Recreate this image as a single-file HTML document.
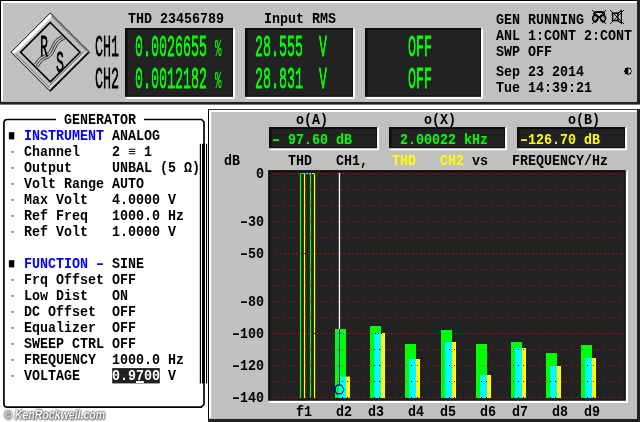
<!DOCTYPE html>
<html lang="en"><head><meta charset="utf-8"><title>R&amp;S UPL THD display</title>
<style>
html,body{margin:0;padding:0;background:#fff}
body{width:640px;height:422px;position:relative;overflow:hidden}
#bg{position:absolute;left:0;top:0;display:block}
span{position:absolute;white-space:pre;display:block;will-change:transform}
.m{font:bold 13.333px/16px "Liberation Mono","DejaVu Sans Mono",monospace;height:16px;transform:scaleY(1.035);transform-origin:0 11.55px;color:#000}
.b{font:29.6px/40px "Liberation Mono","DejaVu Sans Mono",monospace;height:40px;transform:scale(0.4505,1);transform-origin:0 27.9px;-webkit-text-stroke-width:0.8px}
.m i{font-style:normal;display:inline-block;transform:scaleX(1.55)}
.b i{font-style:normal;font-size:0.82em;-webkit-text-stroke-width:0.3px}
.wm{font:italic bold 13.7px/14px "Liberation Sans",Arial,sans-serif;color:#fff;text-shadow:0 0 1.5px #444,0 0 2px #555,0 0 2.5px #777,1px 1px 2px #777;transform:scaleX(0.772);transform-origin:0 0}
</style></head>
<body>
<svg id="bg" width="640" height="422" viewBox="0 0 640 422">
<rect x="0.00" y="0.00" width="640.00" height="422.00" fill="#ffffff" />
<rect x="0.00" y="0.00" width="640.00" height="104.60" fill="#202020" />
<rect x="0.00" y="0.00" width="637.00" height="101.70" fill="#000" />
<rect x="1.00" y="1.00" width="636.00" height="100.70" fill="#fff" />
<rect x="3.00" y="3.00" width="634.00" height="98.70" fill="#c0c0c0" />
<path d="M235 28 L235 99 L125 99 L127.0 96.8 L233.0 96.8 L233.0 30.2 Z" fill="#fff"/>
<rect x="125.00" y="28.00" width="108.00" height="68.80" fill="#0e0e0e" />
<rect x="127.40" y="30.00" width="104.60" height="65.50" fill="#222222" />
<path d="M355 28 L355 99 L245 99 L247.0 96.8 L353.0 96.8 L353.0 30.2 Z" fill="#fff"/>
<rect x="245.00" y="28.00" width="108.00" height="68.80" fill="#0e0e0e" />
<rect x="247.40" y="30.00" width="104.60" height="65.50" fill="#222222" />
<path d="M483 28 L483 99 L365 99 L367.0 96.8 L481.0 96.8 L481.0 30.2 Z" fill="#fff"/>
<rect x="365.00" y="28.00" width="116.00" height="68.80" fill="#0e0e0e" />
<rect x="367.40" y="30.00" width="112.60" height="65.50" fill="#222222" />
<path d="M50.3 12.9 L89.6 52.2 L50.3 91.5 L11.0 52.2 Z" fill="#c0c0c0" stroke="#000" stroke-width="0.9"/>
<path d="M11.8 52.2 L50.3 13.7 L51.5 16.2 L50.3 18.6 L16.7 52.2 L14.3 53.4 Z" fill="#fff"/>
<path d="M85.1 52.2 L50.3 87.0" stroke="#fff" stroke-width="0.9" fill="none"/>
<path d="M83.3 52.2 L50.3 85.2 M86.7 51.2 L51.3 15.8" stroke="#444" stroke-width="0.8" fill="none"/>
<path d="M15.3 53.2 L49.3 87.2" stroke="#555" stroke-width="0.7" fill="none"/>
<path d="M89.6 52.2 L50.3 91.5 L50.3 89.6 L87.7 52.2 Z" fill="#000"/>
<path d="M50.3 22.5 L80.0 52.2 L50.3 81.9 L20.6 52.2 Z" fill="none" stroke="#000" stroke-width="1.6"/>
<path d="M34.4 64.4 C36.9 60.4 39.4 56.9 42.9 55.7 C46.4 54.4 48.9 52.4 50.9 48.4 C52.9 43.9 54.4 40.4 56.9 38.7 C58.4 37.6 59.9 36.9 61.8 35.6" fill="none" stroke="#111" stroke-width="0.85"/>
<path d="M36.0 66.0 C38.5 62.0 41.0 58.5 44.5 57.3 C48.0 56.0 50.5 54.0 52.5 50.0 C54.5 45.5 56.0 42.0 58.5 40.3 C60.0 39.2 61.5 38.5 63.4 37.2" fill="none" stroke="#111" stroke-width="0.85"/>
<path d="M37.6 67.6 C40.1 63.6 42.6 60.1 46.1 58.9 C49.6 57.6 52.1 55.6 54.1 51.6 C56.1 47.1 57.6 43.6 60.1 41.9 C61.6 40.8 63.1 40.1 65.0 38.8" fill="none" stroke="#111" stroke-width="0.85"/>
<g stroke="#000" fill="none"><path d="M594.3 16.5 L594.3 13.6 Q594.3 12 596.6 12 L601.7 12 Q604 12 604 13.6 L604 16.5" stroke-width="2.1"/><path d="M595.2 15.2 Q598 15.4 598 18.4 Q597.6 21.2 595.4 22.2 Q592.6 20.6 592.7 18 Q593 15.4 595.2 15.2 Z" stroke-width="1.5" fill="#aaa"/><path d="M603.1 15.2 Q600.3 15.4 600.3 18.4 Q600.7 21.2 602.9 22.2 Q605.7 20.6 605.6 18 Q605.3 15.4 603.1 15.2 Z" stroke-width="1.5" fill="#aaa"/><path d="M592 10 L606 24 M606 10 L592 24" stroke-width="0.9"/></g>
<g stroke="#000" fill="none"><rect x="612.6" y="13.2" width="5.2" height="7.4" stroke-width="1.5"/><path d="M617.8 13.2 L621.4 10.6 L621.4 23.2 L617.8 20.6" stroke-width="1.2"/><path d="M610 10 L624 24 M624 10 L610 24" stroke-width="0.9"/></g>
<circle cx="628" cy="71.1" r="3.9" fill="#000"/>
<path d="M628.4 68 L631.6 71.1 L628.4 74.2 Z" fill="#ddd"/>
<circle cx="631.70" cy="72.63" r="0.7" fill="#c0c0c0"/>
<circle cx="629.53" cy="74.80" r="0.7" fill="#c0c0c0"/>
<circle cx="626.47" cy="74.80" r="0.7" fill="#c0c0c0"/>
<circle cx="624.30" cy="72.63" r="0.7" fill="#c0c0c0"/>
<circle cx="624.30" cy="69.57" r="0.7" fill="#c0c0c0"/>
<circle cx="626.47" cy="67.40" r="0.7" fill="#c0c0c0"/>
<circle cx="629.53" cy="67.40" r="0.7" fill="#c0c0c0"/>
<circle cx="631.70" cy="69.57" r="0.7" fill="#c0c0c0"/>
<rect x="208.00" y="109.00" width="432.00" height="313.00" fill="#202020" />
<rect x="208.00" y="109.00" width="429.00" height="309.70" fill="#000" />
<rect x="209.00" y="109.80" width="428.00" height="308.90" fill="#fff" />
<rect x="211.20" y="112.00" width="425.80" height="306.70" fill="#c0c0c0" />
<path d="M379 127 L379 150.2 L269 150.2 L271.0 148.2 L377.0 148.2 L377.0 129.0 Z" fill="#fff"/>
<rect x="269.00" y="127.00" width="108.00" height="21.20" fill="#0e0e0e" />
<rect x="271.40" y="129.00" width="104.60" height="18.00" fill="#222222" />
<path d="M507 127 L507 150.2 L389 150.2 L391.0 148.2 L505.0 148.2 L505.0 129.0 Z" fill="#fff"/>
<rect x="389.00" y="127.00" width="116.00" height="21.20" fill="#0e0e0e" />
<rect x="391.40" y="129.00" width="112.60" height="18.00" fill="#222222" />
<path d="M627 127 L627 150.2 L517 150.2 L519.0 148.2 L625.0 148.2 L625.0 129.0 Z" fill="#fff"/>
<rect x="517.00" y="127.00" width="108.00" height="21.20" fill="#0e0e0e" />
<rect x="519.40" y="129.00" width="104.60" height="18.00" fill="#222222" />
<path d="M628 170.1 L628 403 L268.1 403 L270.3 400.7 L625.8 400.7 L625.8 172.4 Z" fill="#fff"/>
<rect x="268.10" y="170.10" width="357.70" height="230.60" fill="#0e0e0e" />
<rect x="270.50" y="172.10" width="354.10" height="227.60" fill="#222222" />
<rect x="335.00" y="329.00" width="11.00" height="69.00" fill="#00ff00" />
<rect x="346.00" y="376.60" width="4.00" height="21.40" fill="#ffff00" />
<rect x="339.00" y="376.60" width="7.00" height="21.40" fill="#00ffff" />
<rect x="370.00" y="326.00" width="11.00" height="72.00" fill="#00ff00" />
<rect x="381.00" y="333.00" width="4.00" height="65.00" fill="#ffff00" />
<rect x="374.00" y="333.00" width="7.00" height="65.00" fill="#00ffff" />
<rect x="405.00" y="344.00" width="11.00" height="54.00" fill="#00ff00" />
<rect x="416.00" y="359.00" width="4.00" height="39.00" fill="#ffff00" />
<rect x="409.00" y="359.00" width="7.00" height="39.00" fill="#00ffff" />
<rect x="441.00" y="330.00" width="11.00" height="68.00" fill="#00ff00" />
<rect x="452.00" y="342.00" width="4.00" height="56.00" fill="#ffff00" />
<rect x="445.00" y="342.00" width="7.00" height="56.00" fill="#00ffff" />
<rect x="476.00" y="344.00" width="11.00" height="54.00" fill="#00ff00" />
<rect x="487.00" y="375.00" width="4.00" height="23.00" fill="#ffff00" />
<rect x="480.00" y="375.00" width="7.00" height="23.00" fill="#00ffff" />
<rect x="511.00" y="342.00" width="11.00" height="56.00" fill="#00ff00" />
<rect x="522.00" y="348.00" width="4.00" height="50.00" fill="#ffff00" />
<rect x="515.00" y="348.00" width="7.00" height="50.00" fill="#00ffff" />
<rect x="546.00" y="353.00" width="11.00" height="45.00" fill="#00ff00" />
<rect x="557.00" y="366.00" width="4.00" height="32.00" fill="#ffff00" />
<rect x="550.00" y="366.00" width="7.00" height="32.00" fill="#00ffff" />
<rect x="581.00" y="345.00" width="11.00" height="53.00" fill="#00ff00" />
<rect x="592.00" y="358.00" width="4.00" height="40.00" fill="#ffff00" />
<rect x="585.00" y="358.00" width="7.00" height="40.00" fill="#00ffff" />
<defs><pattern id="g3" patternUnits="userSpaceOnUse" x="273" y="173" width="16" height="16"><rect x="0" y="0" width="1" height="1" fill="#f00808"/><rect x="5" y="0" width="1" height="1" fill="#f00808"/><rect x="10" y="0" width="1" height="1" fill="#f00808"/></pattern><pattern id="g5" patternUnits="userSpaceOnUse" x="273" y="173" width="16" height="16"><rect x="0" y="0" width="1" height="1" fill="#f00808"/><rect x="3" y="0" width="1" height="1" fill="#f00808"/><rect x="6" y="0" width="1" height="1" fill="#f00808"/><rect x="9" y="0" width="1" height="1" fill="#f00808"/><rect x="12" y="0" width="1" height="1" fill="#f00808"/></pattern><pattern id="g4" patternUnits="userSpaceOnUse" x="273" y="173" width="16" height="16"><rect x="3" y="0" width="1" height="1" fill="#f00808"/><rect x="7" y="0" width="1" height="1" fill="#f00808"/><rect x="11" y="0" width="1" height="1" fill="#f00808"/><rect x="15" y="0" width="1" height="1" fill="#f00808"/></pattern></defs>
<rect x="273" y="173" width="349" height="1" fill="url(#g5)"/>
<rect x="273" y="189" width="349" height="1" fill="url(#g3)"/>
<rect x="273" y="205" width="349" height="1" fill="url(#g3)"/>
<rect x="273" y="221" width="349" height="1" fill="url(#g3)"/>
<rect x="273" y="237" width="349" height="1" fill="url(#g3)"/>
<rect x="273" y="253" width="349" height="1" fill="url(#g4)"/>
<rect x="273" y="269" width="349" height="1" fill="url(#g3)"/>
<rect x="273" y="285" width="349" height="1" fill="url(#g3)"/>
<rect x="273" y="301" width="349" height="1" fill="url(#g3)"/>
<rect x="273" y="317" width="349" height="1" fill="url(#g3)"/>
<rect x="273" y="333" width="349" height="1" fill="url(#g5)"/>
<rect x="337" y="333" width="1" height="1" fill="#ff00ff"/>
<rect x="340" y="333" width="1" height="1" fill="#ff00ff"/>
<rect x="343" y="333" width="1" height="1" fill="#ff00ff"/>
<rect x="372" y="333" width="1" height="1" fill="#ff00ff"/>
<rect x="375" y="333" width="1" height="1" fill="#000000"/>
<rect x="378" y="333" width="1" height="1" fill="#000000"/>
<rect x="381" y="333" width="1" height="1" fill="#0000ff"/>
<rect x="442" y="333" width="1" height="1" fill="#ff00ff"/>
<rect x="445" y="333" width="1" height="1" fill="#ff00ff"/>
<rect x="449" y="333" width="1" height="1" fill="#ff00ff"/>
<rect x="273" y="349" width="349" height="1" fill="url(#g3)"/>
<rect x="337" y="349" width="1" height="1" fill="#ff00ff"/>
<rect x="342" y="349" width="1" height="1" fill="#ff00ff"/>
<rect x="374" y="349" width="1" height="1" fill="#000000"/>
<rect x="379" y="349" width="1" height="1" fill="#000000"/>
<rect x="406" y="349" width="1" height="1" fill="#ff00ff"/>
<rect x="411" y="349" width="1" height="1" fill="#ff00ff"/>
<rect x="443" y="349" width="1" height="1" fill="#ff00ff"/>
<rect x="449" y="349" width="1" height="1" fill="#000000"/>
<rect x="454" y="349" width="1" height="1" fill="#0000ff"/>
<rect x="481" y="349" width="1" height="1" fill="#ff00ff"/>
<rect x="486" y="349" width="1" height="1" fill="#ff00ff"/>
<rect x="513" y="349" width="1" height="1" fill="#ff00ff"/>
<rect x="518" y="349" width="1" height="1" fill="#000000"/>
<rect x="523" y="349" width="1" height="1" fill="#0000ff"/>
<rect x="582" y="349" width="1" height="1" fill="#ff00ff"/>
<rect x="587" y="349" width="1" height="1" fill="#ff00ff"/>
<rect x="273" y="365" width="349" height="1" fill="url(#g3)"/>
<rect x="337" y="365" width="1" height="1" fill="#ff00ff"/>
<rect x="342" y="365" width="1" height="1" fill="#ff00ff"/>
<rect x="374" y="365" width="1" height="1" fill="#000000"/>
<rect x="379" y="365" width="1" height="1" fill="#000000"/>
<rect x="406" y="365" width="1" height="1" fill="#ff00ff"/>
<rect x="411" y="365" width="1" height="1" fill="#000000"/>
<rect x="417" y="365" width="1" height="1" fill="#0000ff"/>
<rect x="443" y="365" width="1" height="1" fill="#ff00ff"/>
<rect x="449" y="365" width="1" height="1" fill="#000000"/>
<rect x="454" y="365" width="1" height="1" fill="#0000ff"/>
<rect x="481" y="365" width="1" height="1" fill="#ff00ff"/>
<rect x="486" y="365" width="1" height="1" fill="#ff00ff"/>
<rect x="513" y="365" width="1" height="1" fill="#ff00ff"/>
<rect x="518" y="365" width="1" height="1" fill="#000000"/>
<rect x="523" y="365" width="1" height="1" fill="#0000ff"/>
<rect x="550" y="365" width="1" height="1" fill="#ff00ff"/>
<rect x="555" y="365" width="1" height="1" fill="#ff00ff"/>
<rect x="582" y="365" width="1" height="1" fill="#ff00ff"/>
<rect x="587" y="365" width="1" height="1" fill="#000000"/>
<rect x="593" y="365" width="1" height="1" fill="#0000ff"/>
<rect x="273" y="381" width="349" height="1" fill="url(#g3)"/>
<rect x="337" y="381" width="1" height="1" fill="#ff00ff"/>
<rect x="342" y="381" width="1" height="1" fill="#000000"/>
<rect x="347" y="381" width="1" height="1" fill="#0000ff"/>
<rect x="374" y="381" width="1" height="1" fill="#000000"/>
<rect x="379" y="381" width="1" height="1" fill="#000000"/>
<rect x="406" y="381" width="1" height="1" fill="#ff00ff"/>
<rect x="411" y="381" width="1" height="1" fill="#000000"/>
<rect x="417" y="381" width="1" height="1" fill="#0000ff"/>
<rect x="443" y="381" width="1" height="1" fill="#ff00ff"/>
<rect x="449" y="381" width="1" height="1" fill="#000000"/>
<rect x="454" y="381" width="1" height="1" fill="#0000ff"/>
<rect x="481" y="381" width="1" height="1" fill="#000000"/>
<rect x="486" y="381" width="1" height="1" fill="#000000"/>
<rect x="513" y="381" width="1" height="1" fill="#ff00ff"/>
<rect x="518" y="381" width="1" height="1" fill="#000000"/>
<rect x="523" y="381" width="1" height="1" fill="#0000ff"/>
<rect x="550" y="381" width="1" height="1" fill="#000000"/>
<rect x="555" y="381" width="1" height="1" fill="#000000"/>
<rect x="582" y="381" width="1" height="1" fill="#ff00ff"/>
<rect x="587" y="381" width="1" height="1" fill="#000000"/>
<rect x="593" y="381" width="1" height="1" fill="#0000ff"/>
<rect x="273" y="397" width="349" height="1" fill="url(#g3)"/>
<rect x="337" y="397" width="1" height="1" fill="#ff00ff"/>
<rect x="342" y="397" width="1" height="1" fill="#000000"/>
<rect x="347" y="397" width="1" height="1" fill="#0000ff"/>
<rect x="374" y="397" width="1" height="1" fill="#000000"/>
<rect x="379" y="397" width="1" height="1" fill="#000000"/>
<rect x="406" y="397" width="1" height="1" fill="#ff00ff"/>
<rect x="411" y="397" width="1" height="1" fill="#000000"/>
<rect x="417" y="397" width="1" height="1" fill="#0000ff"/>
<rect x="443" y="397" width="1" height="1" fill="#ff00ff"/>
<rect x="449" y="397" width="1" height="1" fill="#000000"/>
<rect x="454" y="397" width="1" height="1" fill="#0000ff"/>
<rect x="481" y="397" width="1" height="1" fill="#000000"/>
<rect x="486" y="397" width="1" height="1" fill="#000000"/>
<rect x="513" y="397" width="1" height="1" fill="#ff00ff"/>
<rect x="518" y="397" width="1" height="1" fill="#000000"/>
<rect x="523" y="397" width="1" height="1" fill="#0000ff"/>
<rect x="550" y="397" width="1" height="1" fill="#000000"/>
<rect x="555" y="397" width="1" height="1" fill="#000000"/>
<rect x="582" y="397" width="1" height="1" fill="#ff00ff"/>
<rect x="587" y="397" width="1" height="1" fill="#000000"/>
<rect x="593" y="397" width="1" height="1" fill="#0000ff"/>
<rect x="299.90" y="173.00" width="1.22" height="225.00" fill="#00ff00" />
<rect x="309.90" y="173.00" width="1.22" height="225.00" fill="#00ff00" />
<rect x="303.90" y="173.00" width="1.22" height="225.00" fill="#ffff00" />
<rect x="313.90" y="173.00" width="1.22" height="225.00" fill="#ffff00" />
<rect x="301.00" y="173.00" width="3.00" height="1.10" fill="#00ff00" />
<rect x="304.00" y="173.00" width="7.00" height="1.10" fill="#00ffff" />
<rect x="311.00" y="173.00" width="4.00" height="1.10" fill="#ffff00" />
<rect x="301.00" y="173.00" width="1.00" height="1.00" fill="#ff00ff" />
<rect x="305.00" y="173.00" width="1.00" height="1.00" fill="#222222" />
<rect x="308.00" y="173.00" width="1.00" height="1.00" fill="#222222" />
<rect x="311.00" y="173.00" width="1.00" height="1.00" fill="#0000ff" />
<rect x="314.00" y="173.00" width="1.00" height="1.00" fill="#ff4000" />
<rect x="310.00" y="189.00" width="1.00" height="1.00" fill="#ff00ff" />
<rect x="310.00" y="205.00" width="1.00" height="1.00" fill="#ff00ff" />
<rect x="310.00" y="221.00" width="1.00" height="1.00" fill="#ff00ff" />
<rect x="310.00" y="237.00" width="1.00" height="1.00" fill="#ff00ff" />
<rect x="300.00" y="253.00" width="1.00" height="1.00" fill="#ff00ff" />
<rect x="304.00" y="253.00" width="1.00" height="1.00" fill="#0000ff" />
<rect x="310.00" y="269.00" width="1.00" height="1.00" fill="#ff00ff" />
<rect x="310.00" y="285.00" width="1.00" height="1.00" fill="#ff00ff" />
<rect x="310.00" y="301.00" width="1.00" height="1.00" fill="#ff00ff" />
<rect x="310.00" y="317.00" width="1.00" height="1.00" fill="#ff00ff" />
<rect x="314.00" y="333.00" width="1.00" height="1.00" fill="#0000ff" />
<rect x="310.00" y="349.00" width="1.00" height="1.00" fill="#ff00ff" />
<rect x="310.00" y="365.00" width="1.00" height="1.00" fill="#ff00ff" />
<rect x="310.00" y="381.00" width="1.00" height="1.00" fill="#ff00ff" />
<rect x="310.00" y="397.00" width="1.00" height="1.00" fill="#ff00ff" />
<rect x="338.80" y="172.90" width="1.30" height="156.10" fill="#ffffff" />
<rect x="339.00" y="329.00" width="1.00" height="47.60" fill="#0000ff" />
<rect x="339.00" y="376.60" width="1.00" height="8.40" fill="#000000" />
<path d="M337 385.2 L341.6 385.2 L344 389.5 L341.6 393.8 L337 393.8 L335.2 391.5 L335.2 387.5 Z" fill="none" stroke="#000" stroke-width="1"/>
<path d="M339.4 385.2 L337 385.2 L335.2 387.5 L335.2 391.5 L337 393.8 L339.4 393.8" fill="none" stroke="#0000ff" stroke-width="1.1"/>
<path d="M56 119.5 L7.4 119.5 Q3.9 119.5 3.9 123 L3.9 403.5 Q3.9 407.2 7.4 407.2 L201.3 407.2 L204 404.5 L204 122 L201.6 119.5 L144 119.5" fill="none" stroke="#000" stroke-width="1.7"/>
<rect x="199.80" y="143.80" width="1.20" height="239.70" fill="#000" />
<rect x="202.00" y="143.80" width="2.80" height="239.70" fill="#000" />
<rect x="206.00" y="143.80" width="1.10" height="239.70" fill="#000" />
<rect x="8.90" y="132.20" width="5.40" height="7.20" fill="#000" />
<rect x="8.90" y="260.20" width="5.40" height="7.20" fill="#000" />
<rect x="11.30" y="151.40" width="2.50" height="1.10" fill="#333" />
<rect x="11.30" y="167.40" width="2.50" height="1.10" fill="#333" />
<rect x="11.30" y="183.40" width="2.50" height="1.10" fill="#333" />
<rect x="11.30" y="199.40" width="2.50" height="1.10" fill="#333" />
<rect x="11.30" y="215.40" width="2.50" height="1.10" fill="#333" />
<rect x="11.30" y="231.40" width="2.50" height="1.10" fill="#333" />
<rect x="11.30" y="279.40" width="2.50" height="1.10" fill="#333" />
<rect x="11.30" y="295.40" width="2.50" height="1.10" fill="#333" />
<rect x="11.30" y="311.40" width="2.50" height="1.10" fill="#333" />
<rect x="11.30" y="327.40" width="2.50" height="1.10" fill="#333" />
<rect x="11.30" y="343.40" width="2.50" height="1.10" fill="#333" />
<rect x="11.30" y="359.40" width="2.50" height="1.10" fill="#333" />
<rect x="11.30" y="375.40" width="2.50" height="1.10" fill="#333" />
<rect x="112.20" y="368.10" width="47.60" height="15.30" fill="#202020" />
<rect x="136.00" y="381.00" width="7.80" height="2.00" fill="#fff" />
</svg>
<span class="m" style="left:128.4px;top:12.05px">THD 23456789</span>
<span class="m" style="left:264.4px;top:12.05px">Input RMS</span>
<span class="m" style="left:496px;top:12.85px">GEN RUNNING</span>
<span class="m" style="left:496px;top:29.05px">ANL 1:CONT 2:CONT</span>
<span class="m" style="left:496px;top:45.15px">SWP OFF</span>
<span class="m" style="left:496px;top:64.75px">Sep 23 2014</span>
<span class="m" style="left:496px;top:81.05px">Tue 14:39:21</span>
<span class="b" style="left:95px;top:28.00px;color:#000">CH1</span>
<span class="b" style="left:95px;top:59.70px;color:#000">CH2</span>
<span class="b" style="left:135px;top:28.00px;color:#0f0">0.0026655 <i>%</i></span>
<span class="b" style="left:135px;top:59.70px;color:#0f0">0.0012182 <i>%</i></span>
<span class="b" style="left:255px;top:28.00px;color:#0f0">28.555  V</span>
<span class="b" style="left:255px;top:59.70px;color:#0f0">28.831  V</span>
<span class="b" style="left:408px;top:28.00px;color:#0f0">OFF</span>
<span class="b" style="left:408px;top:59.70px;color:#0f0">OFF</span>
<span class="b l" style="left:39.6px;top:27.6px;color:#000">R</span>
<span class="b l" style="left:55.8px;top:43.7px;color:#000">S</span>
<span class="m" style="left:64px;top:113.25px">GENERATOR</span>
<span class="m" style="left:24px;top:128.95px;color:#0000ff">INSTRUMENT</span>
<span class="m" style="left:112px;top:128.95px">ANALOG</span>
<span class="m" style="left:24px;top:144.95px">Channel</span>
<span class="m" style="left:112px;top:144.95px">2 ≡ 1</span>
<span class="m" style="left:24px;top:160.95px">Output</span>
<span class="m" style="left:112px;top:160.95px">UNBAL (5 Ω)</span>
<span class="m" style="left:24px;top:176.95px">Volt Range</span>
<span class="m" style="left:112px;top:176.95px">AUTO</span>
<span class="m" style="left:24px;top:192.95px">Max Volt</span>
<span class="m" style="left:112px;top:192.95px">4.0000 V</span>
<span class="m" style="left:24px;top:208.95px">Ref Freq</span>
<span class="m" style="left:112px;top:208.95px">1000.0 Hz</span>
<span class="m" style="left:24px;top:224.95px">Ref Volt</span>
<span class="m" style="left:112px;top:224.95px">1.0000 V</span>
<span class="m" style="left:24px;top:256.95px;color:#0000ff">FUNCTION <i>-</i></span>
<span class="m" style="left:112px;top:256.95px">SINE</span>
<span class="m" style="left:24px;top:272.95px">Frq Offset</span>
<span class="m" style="left:112px;top:272.95px">OFF</span>
<span class="m" style="left:24px;top:288.95px">Low Dist</span>
<span class="m" style="left:112px;top:288.95px">ON</span>
<span class="m" style="left:24px;top:304.95px">DC Offset</span>
<span class="m" style="left:112px;top:304.95px">OFF</span>
<span class="m" style="left:24px;top:320.95px">Equalizer</span>
<span class="m" style="left:112px;top:320.95px">OFF</span>
<span class="m" style="left:24px;top:336.95px">SWEEP CTRL</span>
<span class="m" style="left:112px;top:336.95px">OFF</span>
<span class="m" style="left:24px;top:352.95px">FREQUENCY</span>
<span class="m" style="left:112px;top:352.95px">1000.0 Hz</span>
<span class="m" style="left:24px;top:368.95px">VOLTAGE</span>
<span class="m" style="left:112px;top:368.95px;color:#fff">0.9700</span>
<span class="m" style="left:168px;top:368.95px">V</span>
<span class="wm" style="left:4px;top:407.9px">© KenRockwell.com</span>
<span class="m" style="left:296px;top:113.25px">o(A)</span>
<span class="m" style="left:424px;top:113.25px">o(X)</span>
<span class="m" style="left:568px;top:113.25px">o(B)</span>
<span class="m" style="left:272px;top:133.15px;color:#00ff00"><i>-</i> 97.60 dB</span>
<span class="m" style="left:400px;top:133.15px;color:#00ff00">2.00022 kHz</span>
<span class="m" style="left:520px;top:133.15px;color:#ffff00"><i>-</i>126.70 dB</span>
<span class="m" style="left:224px;top:154.15px">dB</span>
<span class="m" style="left:288px;top:154.15px">THD</span>
<span class="m" style="left:336px;top:154.15px">CH1,</span>
<span class="m" style="left:392px;top:154.15px;color:#ffff00">THD</span>
<span class="m" style="left:440px;top:154.15px;color:#ffff00">CH2</span>
<span class="m" style="left:472px;top:154.15px">vs</span>
<span class="m" style="left:512px;top:154.15px">FREQUENCY/Hz</span>
<span class="m" style="left:256px;top:167.15px">0</span>
<span class="m" style="left:240px;top:215.15px"><i>-</i>30</span>
<span class="m" style="left:240px;top:247.15px"><i>-</i>50</span>
<span class="m" style="left:240px;top:295.15px"><i>-</i>80</span>
<span class="m" style="left:232px;top:327.15px"><i>-</i>100</span>
<span class="m" style="left:232px;top:359.15px"><i>-</i>120</span>
<span class="m" style="left:232px;top:391.15px"><i>-</i>140</span>
<span class="m" style="left:296px;top:404.55px">f1</span>
<span class="m" style="left:336px;top:404.55px">d2</span>
<span class="m" style="left:368px;top:404.55px">d3</span>
<span class="m" style="left:408px;top:404.55px">d4</span>
<span class="m" style="left:440px;top:404.55px">d5</span>
<span class="m" style="left:480px;top:404.55px">d6</span>
<span class="m" style="left:512px;top:404.55px">d7</span>
<span class="m" style="left:552px;top:404.55px">d8</span>
<span class="m" style="left:584px;top:404.55px">d9</span>
</body></html>
